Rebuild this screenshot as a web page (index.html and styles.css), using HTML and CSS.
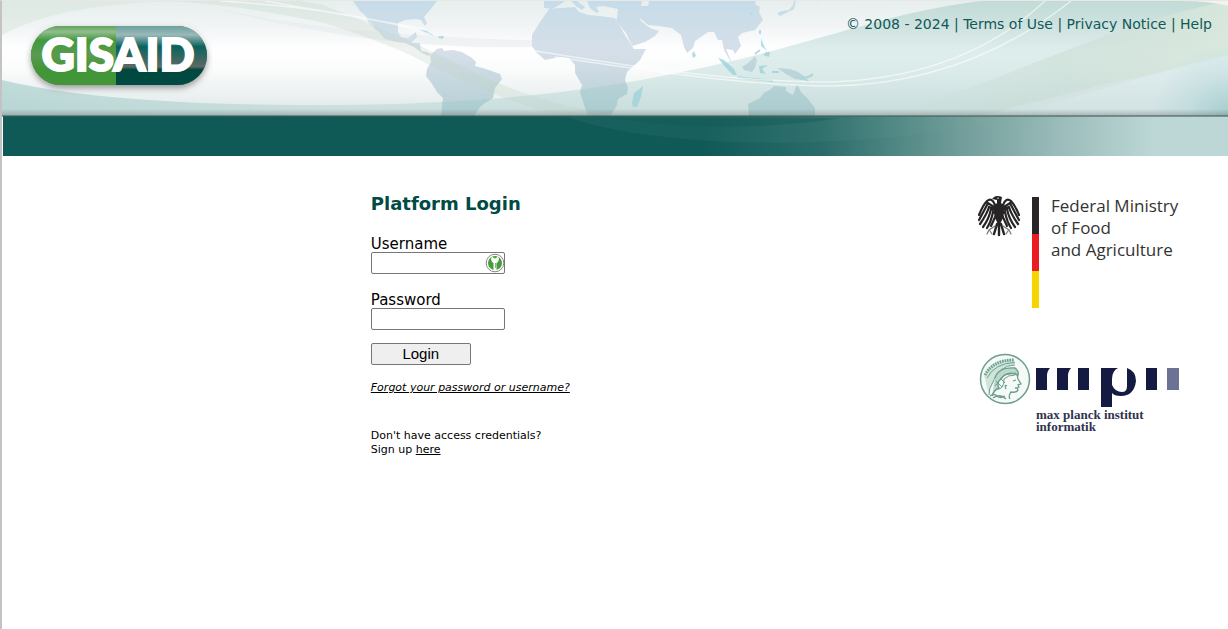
FILE: index.html
```html
<!DOCTYPE html>
<html lang="en">
<head>
<meta charset="utf-8">
<title>GISAID - Platform Login</title>
<link rel="stylesheet" href="styles.css">
</head>
<body>
<header class="masthead">
  <svg class="backdrop" viewBox="2 1 1226 155" preserveAspectRatio="xMidYMin slice" aria-hidden="true">
    <defs>
      <linearGradient id="sky" x1="0" y1="0" x2="0" y2="1"><stop offset="0" stop-color="#e6efed"/><stop offset=".22" stop-color="#f1f4f5"/><stop offset=".42" stop-color="#fff"/><stop offset=".6" stop-color="#fafbfb"/><stop offset="1" stop-color="#dfe7e7"/></linearGradient>
      <linearGradient id="land" x1="0" y1="0" x2="0" y2="116" gradientUnits="userSpaceOnUse"><stop offset="0" stop-color="#c5dce8"/><stop offset=".45" stop-color="#d6dfe9"/><stop offset="1" stop-color="#b4cfd3"/></linearGradient>
      <linearGradient id="sea" x1="0" y1="0" x2="0" y2="116" gradientUnits="userSpaceOnUse"><stop offset="0" stop-color="#8fc0b4" stop-opacity=".42"/><stop offset=".5" stop-color="#9ccbc8" stop-opacity=".32"/><stop offset="1" stop-color="#8fc4c0" stop-opacity=".3"/></linearGradient>
      <linearGradient id="seaLeft" x1="0" y1="0" x2="1" y2="0"><stop offset="0" stop-color="#94c4c1" stop-opacity=".34"/><stop offset=".6" stop-color="#94c4c1" stop-opacity="0"/></linearGradient>
      <linearGradient id="shade" x1="0" y1="0" x2="0" y2="1"><stop offset="0" stop-color="#555" stop-opacity="0"/><stop offset="1" stop-color="#555" stop-opacity=".32"/></linearGradient>
      <linearGradient id="bar" x1="2" x2="1228" y1="0" y2="0" gradientUnits="userSpaceOnUse"><stop offset="0" stop-color="#0f5957"/><stop offset=".57" stop-color="#0f5957"/><stop offset=".67" stop-color="#2b6c6a"/><stop offset=".72" stop-color="#498380"/><stop offset=".78" stop-color="#709c99"/><stop offset=".86" stop-color="#99bbb9"/><stop offset=".94" stop-color="#bcd7d6"/><stop offset="1" stop-color="#bcd7d6"/></linearGradient>
      <radialGradient id="corner" cx="1228" cy="116" r="75" gradientUnits="userSpaceOnUse"><stop offset="0" stop-color="#78b9ba" stop-opacity=".5"/><stop offset=".5" stop-color="#78b9ba" stop-opacity=".18"/><stop offset="1" stop-color="#78b9ba" stop-opacity="0"/></radialGradient>
      <linearGradient id="leaf" x1="900" x2="1228" y1="110" y2="20" gradientUnits="userSpaceOnUse"><stop offset="0" stop-color="#c4d8cd" stop-opacity="0"/><stop offset=".5" stop-color="#c8dbd1" stop-opacity=".5"/><stop offset="1" stop-color="#dbe9dc" stop-opacity=".8"/></linearGradient>
    </defs>
    <rect x="2" y="1" width="1226" height="115" fill="url(#sky)"/>
    <path d="M2 35Q60 3 180 1H2Z" fill="#d8e6dd" opacity=".55"/>
    <path d="M190 1Q320 40 620 42Q480 55 350 36Q260 22 190 1Z" fill="#e3eaea" opacity=".5"/>
    <g fill="url(#land)">
      <path d="M353 1 360 11 367 17 371 24 379 32 385 39 397 42 405 43 414 47 422 53 428 56 431 54 427 52 421 51 420 43 411 43 417 37 416 32 408 38 401 37 398 32 398 23 405 20 415 19 421 20 425 26 427 23 424 17 430 10 437 1ZM365 15 376 29 377 31 369 23Z"/>
      <path d="M430 55 437 49 442 48 444 51 453 50 462 52 472 58 476 62 475 66 486 69 500 74 502 79 495 88 493 98 485 103 480 107 474 116H441L443 98 437 92 432 84 426 76 427 69 431 62Z"/>
      <path d="M549 9 560 8 575 7 579 12 589 15 600 16 615 18 625 35 632 46 634 49 646 49 640 60 627 72 625 80 628 88 627 94 618 99 617 105 613 112 610 116H588L584 105 580 92 582 85 575 73 575 65 569 58 560 57 545 60 537 53 532 46 532 35 540 22Z"/>
      <path d="M544 1V8L552 9 561 4 565 1ZM571 1 577 7 582 10 585 7 577 1Z"/>
      <path d="M587 1 590 8 596 13 599 12 596 7 603 6 618 9 617 18 616 21 626 33 632 46 645 42 655 36 659 31 650 28 641 21 640 18 648 25 658 26 672 28 681 35 684 47 687 53 693 48 695 41 708 32 714 32 718 40 722 40 724 50 732 64 729 56 726 49 733 50 735 54 741 46 738 37 742 33 755 30 763 20 759 12 760 7 755 4 756 1H649L648 6 641 6 642 1Z"/>
      <path d="M742 67 748 63 755 56 757 60 755 68 752 72 744 70ZM777 68 790 69 798 72 805 77 810 82 803 80 795 79 786 74ZM749 116 748 104 760 98 765 92 770 90 774 86 786 87 786 91 793 95 797 84 801 92 807 98 815 108 815 116ZM777 13 782 11 789 10 793 5 794 1H796L794 9 786 13 780 16Z"/>
    </g>
    <g fill="#b2dde8">
      <path d="M718 58 724 60 734 69 737 75 733 75 726 68ZM694 51 696 56 693 58 692 54ZM632 103 634 93 643 86 641 97 637 107 633 107ZM761 38 764 46 767 51 761 46ZM766 52 770 52 769 57 763 55ZM759 66 768 65 762 69 766 74 760 73ZM420 30 427 31 434 36 425 33ZM439 36 444 36 443 39 438 38ZM748 12 753 13 752 16Z"/>
      <path d="M738 77Q748 79 756 79L773 81M772 72H779M801 78Q809 78 813 74M760 30V34M760 50 755 54" fill="none" stroke="#b2dde8" stroke-width="2"/>
    </g>
    <path d="M2 80Q100 104 300 105C500 106 620 88 745 58C840 34 900 11 980 1H1228V116H2Z" fill="url(#sea)"/>
    <path d="M2 80Q100 104 300 105C400 106 500 102 560 96V116H2Z" fill="url(#seaLeft)"/>
    <path d="M320 4Q390 30 470 70Q530 102 620 116H560Q490 97 410 55Q360 33 320 22Q220 1 150 1H300Z" fill="#c1d1c3" opacity=".27"/>
    <path d="M880 116C990 90 1090 29 1228 1V55C1130 76 1040 116 960 116Z" fill="url(#leaf)"/>
    <path d="M820 1H900Q840 8 820 14ZM1120 80Q1180 72 1228 55V116H980Z" fill="#edf0f6" opacity=".25"/>
    <path d="M1180 1H1228V6Q1210 1 1180 1Z" fill="#f2f3ed"/>
    <rect x="1150" y="38" width="78" height="78" fill="url(#corner)"/>
    <g fill="none" stroke="#fff" stroke-opacity=".58" stroke-width="1.4">
      <path d="M220 1Q350 9 430 34M265 1Q340 14 425 29"/>
      <path d="M536 51C640 68 730 81 820 82C930 81 1000 43 1045 1M555 57C650 71 740 85 830 86C930 85 1010 49 1071 1"/>
    </g>
    <rect x="2" y="109" width="1226" height="7" fill="url(#shade)"/>
    <rect x="3" y="116" width="1225" height="40" fill="url(#bar)"/>
    <path d="M570 118C660 148 830 150 960 128C1040 117 1100 116 1150 116H570Z" fill="#7fb0ac" opacity=".08"/>
    <path d="M610 118C690 130 770 129 840 118Z" fill="#0f5957" opacity=".35"/>
    <path d="M2 116H1228" stroke="#415e59" stroke-opacity=".55" stroke-width="2"/>
  </svg>
  <a class="brand" href="#" aria-label="GISAID">
    <svg width="188" height="76" viewBox="0 0 188 76">
      <defs>
        <clipPath id="pill"><rect x="6" y="6" width="176" height="59" rx="29.5"/></clipPath>
        <linearGradient id="green" x1="0" y1="0" x2="0" y2="1"><stop offset="0" stop-color="#60a35c"/><stop offset=".1" stop-color="#92bd8f"/><stop offset=".24" stop-color="#43993d"/><stop offset=".5" stop-color="#5a9a50"/><stop offset=".72" stop-color="#439637"/><stop offset="1" stop-color="#439637"/></linearGradient>
        <linearGradient id="teal" x1="0" y1="0" x2="0" y2="1"><stop offset="0" stop-color="#6da09d"/><stop offset=".15" stop-color="#9bb9b9"/><stop offset=".35" stop-color="#0b625d"/><stop offset=".69" stop-color="#5b6965"/><stop offset=".74" stop-color="#00473f"/><stop offset="1" stop-color="#004b43"/></linearGradient>
        <filter id="drop" x="-10%" y="-10%" width="120%" height="140%"><feDropShadow dx="0" dy="3" stdDeviation="3" flood-color="#666" flood-opacity=".65"/></filter>
      </defs>
      <rect x="6" y="6" width="176" height="59" rx="29.5" fill="#397f4b" filter="url(#drop)"/>
      <g clip-path="url(#pill)">
        <rect x="6" y="6" width="85" height="59" fill="url(#green)"/>
        <rect x="91" y="6" width="91" height="59" fill="url(#teal)"/>
      </g>
      <text class="brand-text" x="93" y="51" text-anchor="middle">GISAID</text>
    </svg>
  </a>
  <nav class="legal">© 2008 - 2024 | <a href="#">Terms of Use</a> | <a href="#">Privacy Notice</a> | <a href="#">Help</a></nav>
</header>
<main class="content">
  <form class="login">
    <h1 class="title">Platform Login</h1>
    <div class="field">
      <label for="username">Username</label>
      <div class="input-wrap">
        <input id="username" type="text">
        <svg class="key" width="20" height="20" viewBox="0 0 20 20" aria-hidden="true">
          <circle cx="10" cy="10" r="8.8" fill="#fff" stroke="#888"/>
          <circle cx="10" cy="10" r="7" fill="#459c3d"/>
          <path d="M7 3.2 9 5.2H11L13 3.2 14 6 13 9 11.5 10V17H8.5V10L7 9 6 6Z" fill="#fff"/>
          <path d="M10.5 10V15M11 12H12" stroke="#8ab487"/>
        </svg>
      </div>
    </div>
    <div class="field">
      <label for="password">Password</label>
      <input id="password" type="password">
    </div>
    <button class="submit" type="button">Login</button>
    <a class="forgot" href="#">Forgot your password or username?</a>
    <p class="signup">Don't have access credentials?<br>Sign up <a href="#">here</a></p>
  </form>
  <aside class="partners">
    <div class="ministry">
      <svg width="44" height="44" viewBox="0 0 44 44" aria-hidden="true">
        <g fill="none" stroke="#262424" stroke-width="2.2" stroke-linecap="round">
          <path d="M18 10Q15 2 10 6Q6 10 2 20M17 12 11 8Q8 14 2 25M17 14 12 12Q10 19 3 29M18 15 14 14Q12 24 6 32M18 18 16 17Q14 27 10 33M19 20 14 31"/>
          <path d="M26 10Q29 2 34 6Q38 10 42 20M27 12 33 8Q36 14 42 25M27 14 32 12Q34 19 41 29M26 15 30 14Q32 24 38 32M26 18 28 17Q30 27 34 33M25 20 30 31"/>
          <path d="M22 27V40M20 29 17 39M24 29 27 39" stroke-width="2.4"/>
          <path d="M18 31 12 35 10 39M13 36 15 39M26 31 32 35 34 39M31 36 29 39" stroke="#777" stroke-width="1.2"/>
        </g>
        <path d="M17 2Q20 0 25 2L24 8 28 12 26 23 22 31 18 23 16 12 20 8 20 5 15 4Z" fill="#262424"/>
        <circle cx="21" cy="3.3" r=".7" fill="#fff"/>
      </svg>
      <svg width="8" height="111" viewBox="0 0 8 111" aria-hidden="true"><path d="M0 0H7V37H0Z" fill="#292425"/><path d="M0 37H7V74H0Z" fill="#ec1c24"/><path d="M0 74H7V111H0Z" fill="#f7d500"/></svg>
      <p class="ministry-name">Federal Ministry<br>of Food<br>and Agriculture</p>
    </div>
    <div class="mpi">
      <svg width="52" height="52" viewBox="0 0 52 52" aria-hidden="true">
        <g fill="none" stroke="#6b9d90">
          <circle cx="26" cy="26" r="24.5" stroke-width="1.5" fill="#f5faf6"/>
          <path d="M5 22Q13 5 35 6L36 12Q20 12 13 31Q10 35 10 42" stroke="none" fill="#d0e5da"/>
          <path d="M6 22Q14 7 35 7" stroke-width="3" stroke-dasharray="1.5 1"/>
          <path d="M36 12Q20 12 13 31Q10 35 10 42M8 25Q16 10 36 9.500"/>
          <path d="M16 25Q19 14 36 15Q40 18 39 22Q28 17 22 26Q17 29 20 35Q15 37 13 43" stroke-width="1.4" fill="#bcd8cb"/>
          <path d="M16 33 25 22 37 20M18 36Q25 37 25 26Q29 22 36 22M17 28 23 34M21 25 26 30"/>
          <path d="M38 21 39 26 42 31 39 32 40 34 38 35 39 37Q38 40 32 39Q29 43 31 46M34 28 37 27M36 35 39 35M28 33Q25 31 27 36M11 43Q15 40 18 43T26 43M14 45Q21 40 27 46" stroke-width="1.3"/>
        </g>
      </svg>
      <div class="mpi-mark">
        <svg width="145" height="40" viewBox="0 0 145 40" role="img" aria-label="mpii">
          <g fill="#151a43"><path d="M0 1H14Q11 4 11 9V23H0ZM21 1H35Q32 4 32 9V23H21ZM42 1H53V23H42ZM65 1H82Q76 4 76 12V18Q79 25 86 25Q91 25 91 19V1Q100 4 100 14Q98 29 85 29Q78 29 76 26V40H65ZM110 1H121V23H110Z"/></g>
          <path d="M131 1H143V23H131Z" fill="#6b7294"/>
        </svg>
        <p class="mpi-name">max planck institut<br>informatik</p>
      </div>
    </div>
  </aside>
</main>
</body>
</html>
```
FILE: styles.css
```css
* { box-sizing: border-box; }
body {
  margin: 0;
  min-height: 100vh;
  border-top: 1px solid #e8e8e8;
  border-left: 2px solid #c3c3c3;
  background: #fff;
  color: #000;
  font-family: Verdana, "DejaVu Sans", sans-serif;
}
p, h1 { margin: 0; }
.masthead {
  position: relative;
  display: flex;
  justify-content: space-between;
  align-items: flex-start;
  height: 155px;
  padding: 14px 16px 0 23px;
  overflow: hidden;
}
.backdrop {
  position: absolute;
  inset: 0;
  width: 100%;
  height: 100%;
}
.brand { position: relative; padding-top: 5px; }
.brand svg { display: block; }
.brand-text {
  font: 900 46px Lato, sans-serif;
  fill: #fff;
  stroke: #fff;
  stroke-width: 2px;
}
.legal {
  position: relative;
  font-size: 14px;
  line-height: 18px;
  color: #0f5957;
}
.legal a { color: inherit; text-decoration: none; }
.content {
  display: flex;
  justify-content: space-between;
  padding: 36px 47px 0 calc(30% + 1px);
}
.login {
  display: flex;
  flex-direction: column;
  align-items: flex-start;
}
.title {
  color: #004b43;
  font-size: 18px;
  line-height: 24px;
  margin-bottom: 20px;
}
.field {
  display: flex;
  flex-direction: column;
  font-size: 15px;
  line-height: 16px;
}
.field + .field { margin-top: 18px; }
.field input {
  display: block;
  width: 134px;
  height: 22px;
  border: 1px solid #767676;
  border-radius: 2px;
  background: #fff;
  padding: 1px 4px;
}
.input-wrap { position: relative; }
.key { position: absolute; right: 0; top: 1px; }
.submit {
  width: 100px;
  height: 22px;
  margin-top: 13px;
  padding: 0;
  border: 1px solid #767676;
  border-radius: 2px;
  background: #efefef;
  color: #000;
  font: 15px/18px "Liberation Sans", Arial, sans-serif;
}
.forgot {
  margin-top: 16px;
  color: #000;
  font-size: 11px;
  line-height: 14px;
  font-style: italic;
}
.signup {
  margin-top: 34px;
  font-size: 11px;
  line-height: 14px;
}
.signup a { color: inherit; }
.partners {
  display: flex;
  flex-direction: column;
  gap: 45px;
  padding-top: 3px;
}
.ministry { display: flex; align-items: flex-start; }
.ministry svg:first-child { margin-right: 11px; }
.ministry svg + svg { margin-top: 2px; }
.ministry-name {
  margin-left: 11px;
  color: #333;
  font: 17px/22px "Open Sans", sans-serif;
  white-space: nowrap;
}
.mpi { display: flex; gap: 5px; padding-left: 2px; }
.mpi-mark { padding-top: 14px; }
.mpi-mark svg { display: block; }
.mpi-name {
  padding-top: 2px;
  color: #30334d;
  font: bold 13px/12px "Liberation Serif", serif;
}
```
